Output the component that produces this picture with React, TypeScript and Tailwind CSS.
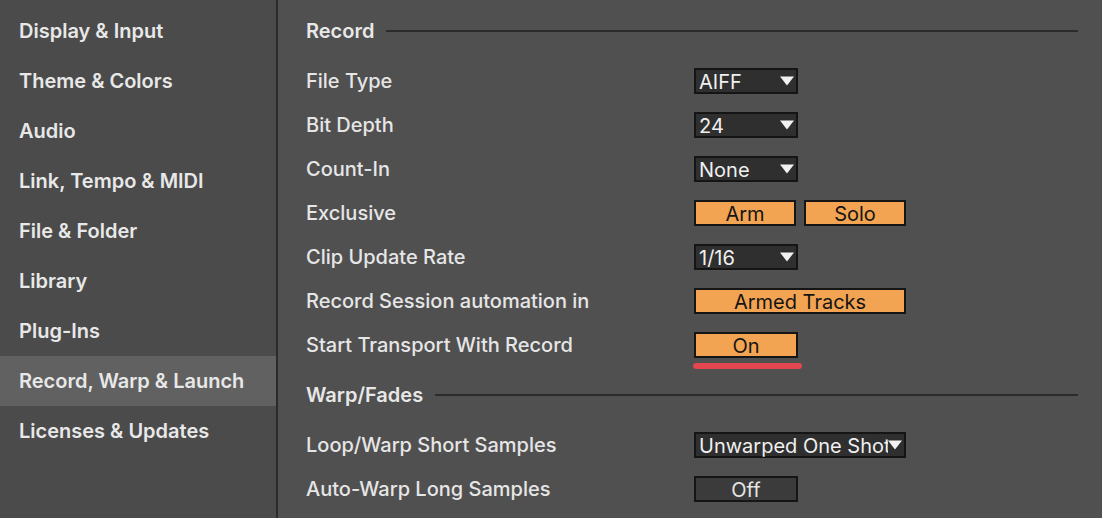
import React from 'react';

const font = { fontFamily: 'Inter, "Noto Sans", sans-serif' };

const navItems = [
  'Display & Input',
  'Theme & Colors',
  'Audio',
  'Link, Tempo & MIDI',
  'File & Folder',
  'Library',
  'Plug-Ins',
  'Record, Warp & Launch',
  'Licenses & Updates',
];

function Caret() {
  return (
    <svg width="14" height="10" viewBox="0 0 14 10" className="shrink-0">
      <path d="M0 0.5 H14 L7 9.5 Z" fill="#f2f2f2" />
    </svg>
  );
}

function Dropdown({ value, wide }: { value: string; wide?: boolean }) {
  return (
    <div
      className={`flex h-[26px] items-center border-2 border-[#151515] bg-[#2f2f2f] pl-[3px] pr-[2px] ${wide ? 'w-[212px]' : 'w-[104px]'}`}
    >
      <span className="flex-1 overflow-hidden whitespace-nowrap pt-[1px] text-[20px] leading-[22px] text-[#f0f0f0]">{value}</span>
      <Caret />
    </div>
  );
}

function Toggle({ label, on, className = 'w-[104px]' }: { label: string; on: boolean; className?: string }) {
  return (
    <div
      className={`flex h-[26px] items-center justify-center border-2 border-[#151515] pt-[1px] text-[20px] leading-[22px] ${className} ${on ? 'bg-[#f2a452] text-[#141414]' : 'bg-[#3b3b3b] text-[#e6e6e6]'}`}
    >
      {label}
    </div>
  );
}

function Heading({ title }: { title: string }) {
  return (
    <div className="my-[6px] flex h-[44px] items-center gap-[12px]">
      <span className="text-[20px] font-semibold text-[#e8e8e8]">{title}</span>
      <div className="h-[2px] flex-1 bg-[#2b2b2b]" />
    </div>
  );
}

function Row({ label, children }: { label: string; children: React.ReactNode }) {
  return (
    <div className="flex h-[44px] items-center">
      <span className="w-[388px] text-[20px] font-medium text-[#e6e6e6]">{label}</span>
      {children}
    </div>
  );
}

export default function App() {
  return (
    <div className="flex h-[518px] w-[1102px] overflow-hidden bg-[#505050]" style={font}>
      <div className="w-[278px] shrink-0 border-r-2 border-[#2b2b2b] bg-[#4b4b4b] pt-[6px]">
        {navItems.map((item) => (
          <div
            key={item}
            className={`flex h-[50px] items-center pl-[19px] text-[20px] font-semibold text-[#e8e8e8] ${item === 'Record, Warp & Launch' ? 'bg-[#616161]' : ''}`}
          >
            {item}
          </div>
        ))}
      </div>

      <div className="flex-1 pl-[28px] pr-[24px] pt-[3px]">
        <Heading title="Record" />
        <Row label="File Type">
          <Dropdown value="AIFF" />
        </Row>
        <Row label="Bit Depth">
          <Dropdown value="24" />
        </Row>
        <Row label="Count-In">
          <Dropdown value="None" />
        </Row>
        <Row label="Exclusive">
          <div className="flex gap-[8px]">
            <Toggle label="Arm" on className="w-[102px]" />
            <Toggle label="Solo" on className="w-[102px]" />
          </div>
        </Row>
        <Row label="Clip Update Rate">
          <Dropdown value="1/16" />
        </Row>
        <Row label="Record Session automation in">
          <Toggle label="Armed Tracks" on className="w-[212px]" />
        </Row>
        <Row label="Start Transport With Record">
          <div className="relative">
            <Toggle label="On" on />
            <div className="absolute left-[-1px] top-[31px] h-[6px] w-[109px] rounded-full bg-[#e2464e]" />
          </div>
        </Row>

        <Heading title="Warp/Fades" />
        <Row label="Loop/Warp Short Samples">
          <Dropdown value="Unwarped One Shot" wide />
        </Row>
        <Row label="Auto-Warp Long Samples">
          <Toggle label="Off" on={false} />
        </Row>
      </div>
    </div>
  );
}
